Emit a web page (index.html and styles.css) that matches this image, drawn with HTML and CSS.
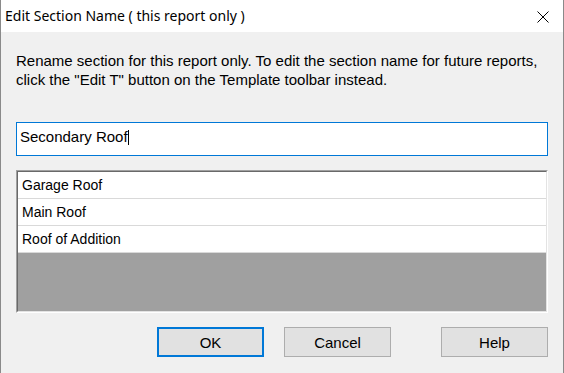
FILE: index.html
```html
<!DOCTYPE html>
<html lang="en">
<head>
    <meta charset="UTF-8">
    <meta name="viewport" content="width=device-width, initial-scale=1.0">
    <title>Edit Section Name</title>
    <link rel="stylesheet" href="styles.css">
</head>
<body>

    <div class="dialog">
        <div class="titlebar">
            <span class="title">Edit Section Name ( this report only )</span>
            <svg class="close-icon" width="12" height="12" viewBox="0 0 12 12">
                <path d="M0.5 0.5 L11.5 11.5 M11.5 0.5 L0.5 11.5" stroke="#000" stroke-width="1" fill="none"/>
            </svg>
        </div>

        <div class="content">
            <p class="intro">Rename section for this report only. To edit the section name for future reports,<br>click the "Edit T" button on the Template toolbar instead.</p>

            <div class="name-input">Secondary Roof<span class="caret"></span></div>

            <div class="list">
                <div class="list-inner">
                    <div class="list-item">Garage Roof</div>
                    <div class="list-item">Main Roof</div>
                    <div class="list-item">Roof of Addition</div>
                    <div class="list-empty"></div>
                </div>
            </div>

            <div class="buttons">
                <button class="btn btn-default">OK</button>
                <button class="btn">Cancel</button>
                <button class="btn btn-help">Help</button>
            </div>
        </div>
    </div>

</body>
</html>
```

FILE: styles.css
```css
body {
    margin: 0;
    font-family: "Liberation Sans", Arial, sans-serif;
    font-size: 15px;
    color: #000;
    background: #f0f0f0;
}

.dialog {
    width: 564px;
    height: 373px;
    box-sizing: border-box;
    background-color: #f0f0f0;
    border-left: 1px solid #8a8a8a;
    border-right: 1px solid #8a8a8a;
    display: flex;
    flex-direction: column;
}

.titlebar {
    height: 32px;
    background-color: #fff;
    display: flex;
    align-items: center;
    padding-left: 4px;
    padding-right: 14px;
}

.title {
    flex: 1;
    font-family: "Noto Sans", "Open Sans", sans-serif;
    font-size: 14px;
    padding-bottom: 2px;
}

.close-icon {
    margin-top: 1px;
}

.content {
    padding: 19px 15px 0 15px;
    display: flex;
    flex-direction: column;
}

.intro {
    margin: 0;
    line-height: 19px;
}

.name-input {
    margin-top: 33px;
    height: 34px;
    box-sizing: border-box;
    border: 1px solid #0078d7;
    background-color: #fff;
    padding: 4px 3px 0 3px;
    line-height: 19px;
}

.caret {
    display: inline-block;
    width: 1px;
    height: 15px;
    background-color: #000;
    vertical-align: -3px;
}

.list {
    margin-top: 14px;
    border: 1px solid;
    border-color: #a0a0a0 #fff #fff #a0a0a0;
    font-size: 14px;
}

.list-inner {
    border: 1px solid;
    border-color: #696969 #e3e3e3 #e3e3e3 #696969;
    display: flex;
    flex-direction: column;
}

.list-item {
    height: 26px;
    line-height: 26px;
    background-color: #fff;
    border-bottom: 1px solid #d9d9d9;
    padding-left: 4px;
}

.list-empty {
    height: 58px;
    background-color: #a0a0a0;
}

.buttons {
    margin-top: 14px;
    display: flex;
    justify-content: flex-end;
    gap: 20px;
}

.btn {
    width: 107px;
    height: 30px;
    box-sizing: border-box;
    background-color: #e1e1e1;
    border: 1px solid #adadad;
    font-family: "Liberation Sans", Arial, sans-serif;
    font-size: 15px;
    color: #000;
    padding: 0;
}

.btn-default {
    border: 2px solid #0078d7;
}

.btn-help {
    margin-left: 30px;
}
```
